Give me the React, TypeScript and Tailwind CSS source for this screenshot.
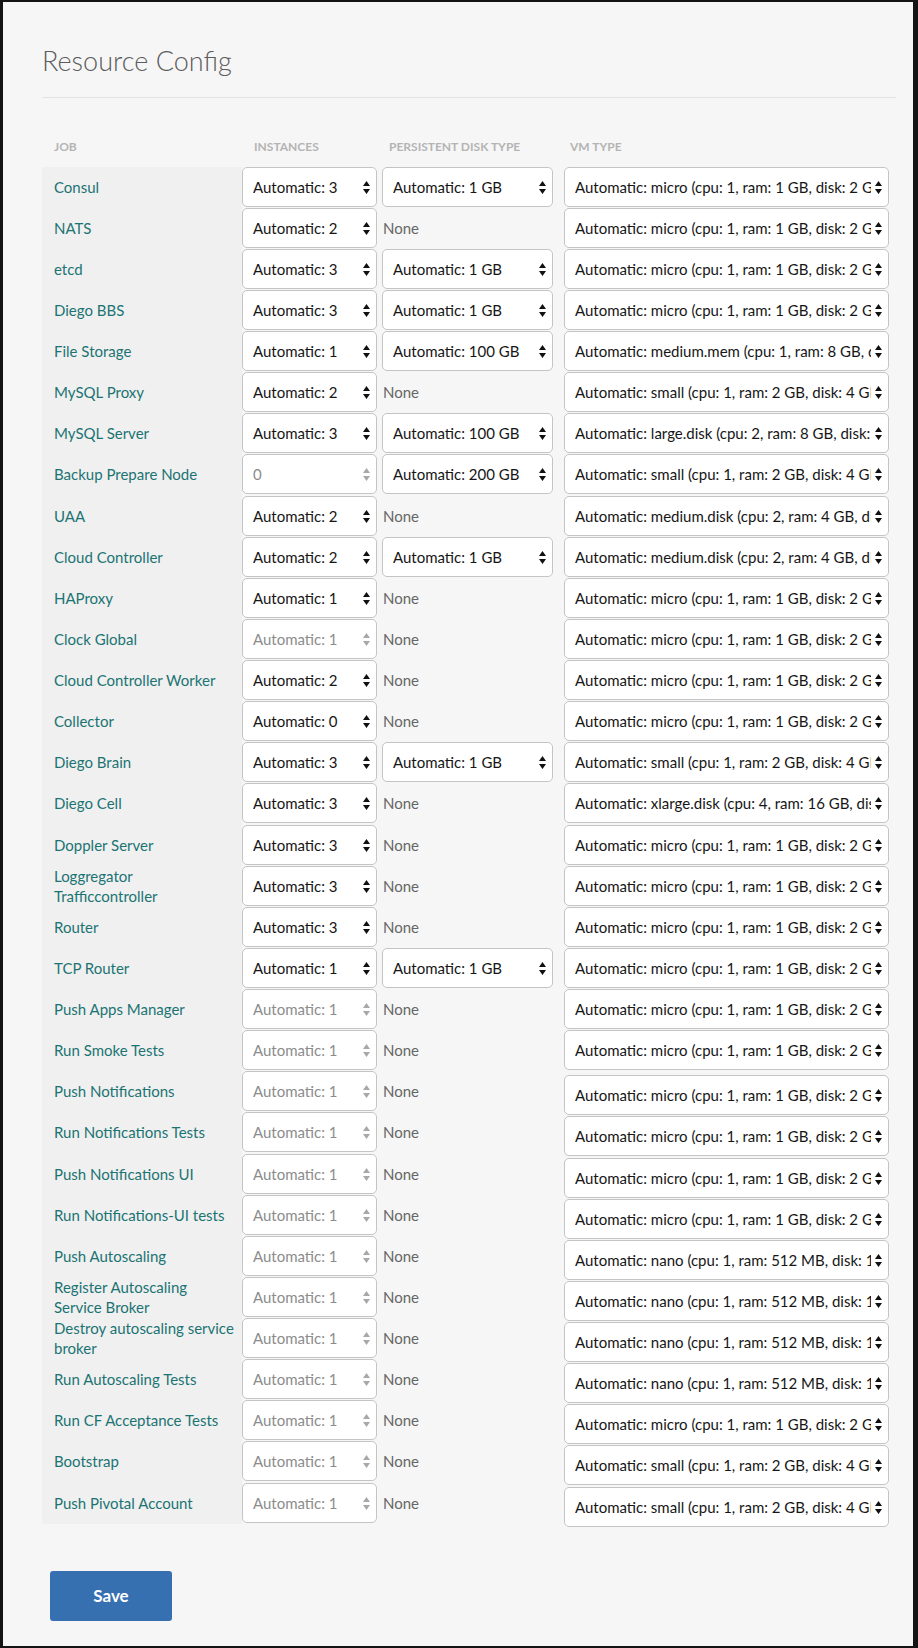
import React from "react";

type Row = {
  job: string[];
  inst: string;
  instOff?: boolean;
  disk?: string;
  vm: string;
};

const MICRO = "Automatic: micro (cpu: 1, ram: 1 GB, disk: 2 GB)";
const SMALL = "Automatic: small (cpu: 1, ram: 2 GB, disk: 4 GB)";
const NANO = "Automatic: nano (cpu: 1, ram: 512 MB, disk: 1 GB)";
const MED_DISK = "Automatic: medium.disk (cpu: 2, ram: 4 GB, disk: 32 GB)";

const rows: Row[] = [
  { job: ["Consul"], inst: "Automatic: 3", disk: "Automatic: 1 GB", vm: MICRO },
  { job: ["NATS"], inst: "Automatic: 2", vm: MICRO },
  { job: ["etcd"], inst: "Automatic: 3", disk: "Automatic: 1 GB", vm: MICRO },
  { job: ["Diego BBS"], inst: "Automatic: 3", disk: "Automatic: 1 GB", vm: MICRO },
  {
    job: ["File Storage"],
    inst: "Automatic: 1",
    disk: "Automatic: 100 GB",
    vm: "Automatic: medium.mem (cpu: 1, ram: 8 GB, disk: 8 GB)",
  },
  { job: ["MySQL Proxy"], inst: "Automatic: 2", vm: SMALL },
  {
    job: ["MySQL Server"],
    inst: "Automatic: 3",
    disk: "Automatic: 100 GB",
    vm: "Automatic: large.disk (cpu: 2, ram: 8 GB, disk: 64 GB)",
  },
  { job: ["Backup Prepare Node"], inst: "0", instOff: true, disk: "Automatic: 200 GB", vm: SMALL },
  { job: ["UAA"], inst: "Automatic: 2", vm: MED_DISK },
  { job: ["Cloud Controller"], inst: "Automatic: 2", disk: "Automatic: 1 GB", vm: MED_DISK },
  { job: ["HAProxy"], inst: "Automatic: 1", vm: MICRO },
  { job: ["Clock Global"], inst: "Automatic: 1", instOff: true, vm: MICRO },
  { job: ["Cloud Controller Worker"], inst: "Automatic: 2", vm: MICRO },
  { job: ["Collector"], inst: "Automatic: 0", vm: MICRO },
  { job: ["Diego Brain"], inst: "Automatic: 3", disk: "Automatic: 1 GB", vm: SMALL },
  {
    job: ["Diego Cell"],
    inst: "Automatic: 3",
    vm: "Automatic: xlarge.disk (cpu: 4, ram: 16 GB, disk: 128 GB)",
  },
  { job: ["Doppler Server"], inst: "Automatic: 3", vm: MICRO },
  { job: ["Loggregator", "Trafficcontroller"], inst: "Automatic: 3", vm: MICRO },
  { job: ["Router"], inst: "Automatic: 3", vm: MICRO },
  { job: ["TCP Router"], inst: "Automatic: 1", disk: "Automatic: 1 GB", vm: MICRO },
  { job: ["Push Apps Manager"], inst: "Automatic: 1", instOff: true, vm: MICRO },
  { job: ["Run Smoke Tests"], inst: "Automatic: 1", instOff: true, vm: MICRO },
  { job: ["Push Notifications"], inst: "Automatic: 1", instOff: true, vm: MICRO },
  { job: ["Run Notifications Tests"], inst: "Automatic: 1", instOff: true, vm: MICRO },
  { job: ["Push Notifications UI"], inst: "Automatic: 1", instOff: true, vm: MICRO },
  { job: ["Run Notifications-UI tests"], inst: "Automatic: 1", instOff: true, vm: MICRO },
  { job: ["Push Autoscaling"], inst: "Automatic: 1", instOff: true, vm: NANO },
  { job: ["Register Autoscaling", "Service Broker"], inst: "Automatic: 1", instOff: true, vm: NANO },
  { job: ["Destroy autoscaling service", "broker"], inst: "Automatic: 1", instOff: true, vm: NANO },
  { job: ["Run Autoscaling Tests"], inst: "Automatic: 1", instOff: true, vm: NANO },
  { job: ["Run CF Acceptance Tests"], inst: "Automatic: 1", instOff: true, vm: MICRO },
  { job: ["Bootstrap"], inst: "Automatic: 1", instOff: true, vm: SMALL },
  { job: ["Push Pivotal Account"], inst: "Automatic: 1", instOff: true, vm: SMALL },
];

function Arrows({ off }: { off?: boolean }) {
  return (
    <svg
      width="7"
      height="13"
      viewBox="0 0 7 13"
      className={off ? "shrink-0 text-[#a8a8a8]" : "shrink-0 text-[#111]"}
    >
      <path d="M3.5 0L7 5H0z M3.5 13L0 8h7z" fill="currentColor" />
    </svg>
  );
}

function Select({ value, off, width }: { value: string; off?: boolean; width: string }) {
  return (
    <div
      className={`${width} flex h-[40px] items-center gap-[4px] rounded-[5px] border border-[#c4c4c4] bg-white pl-[10px] pr-[6px]`}
    >
      <span
        className={`flex-1 overflow-hidden whitespace-nowrap text-[15px] ${
          off ? "text-[#8c8c8c]" : "text-[#161616]"
        }`}
      >
        {value}
      </span>
      <Arrows off={off} />
    </div>
  );
}

export default function App() {
  return (
    <div className="h-[1648px] w-[918px] border-b-2 border-l-[3px] border-r-[5px] border-t-2 border-[#141414] bg-[#f6f6f6] font-['Lato','Liberation_Sans',sans-serif]">
      <div className="pl-[39px] pr-[17px] pt-[42px]">
        <h1 className="text-[27px] font-light leading-[34px] text-[#5c5c5c]">Resource Config</h1>
        <div className="mt-[19px] h-px bg-[#e2e2e2]" />

        <div className="mt-[41px] grid grid-cols-[200px_140px_182px_325px] text-[12px] font-bold uppercase leading-[16px] text-[#b4b4b4]">
          <div className="h-[28px] pl-[12px]">Job</div>
          <div className="h-[28px] pl-[12px]">Instances</div>
          <div className="h-[28px] pl-[7px]">Persistent Disk Type</div>
          <div className="h-[28px] pl-[6px]">VM Type</div>
        </div>

        <div className="grid grid-cols-[200px_140px_182px_325px]">
          {rows.map((r, i) => {
            const h = i % 8 === 7 ? "h-[42px]" : "h-[41px]";
            return (
              <React.Fragment key={i}>
                <div className={`${h} bg-[#f0f0f0] pl-[12px]`}>
                  <div className="flex h-[40px] flex-col justify-center whitespace-nowrap text-[15px] leading-[20px] text-[#1b7473]">
                    {r.job.map((line) => (
                      <span key={line}>{line}</span>
                    ))}
                  </div>
                </div>
                <div className={h}>
                  <Select value={r.inst} off={r.instOff} width="w-[135px]" />
                </div>
                <div className={h}>
                  {r.disk ? (
                    <Select value={r.disk} width="w-[171px]" />
                  ) : (
                    <div className="flex h-[40px] items-center pl-px text-[15px] text-[#666]">None</div>
                  )}
                </div>
                <div className={i >= 22 ? `${h} translate-y-[4px]` : h}>
                  <Select value={r.vm} width="w-[325px]" />
                </div>
              </React.Fragment>
            );
          })}
        </div>

        <button className="ml-[8px] mt-[47px] h-[50px] w-[122px] rounded-[3px] bg-[#3670b0] text-[17px] font-bold text-white">
          Save
        </button>
      </div>
    </div>
  );
}
